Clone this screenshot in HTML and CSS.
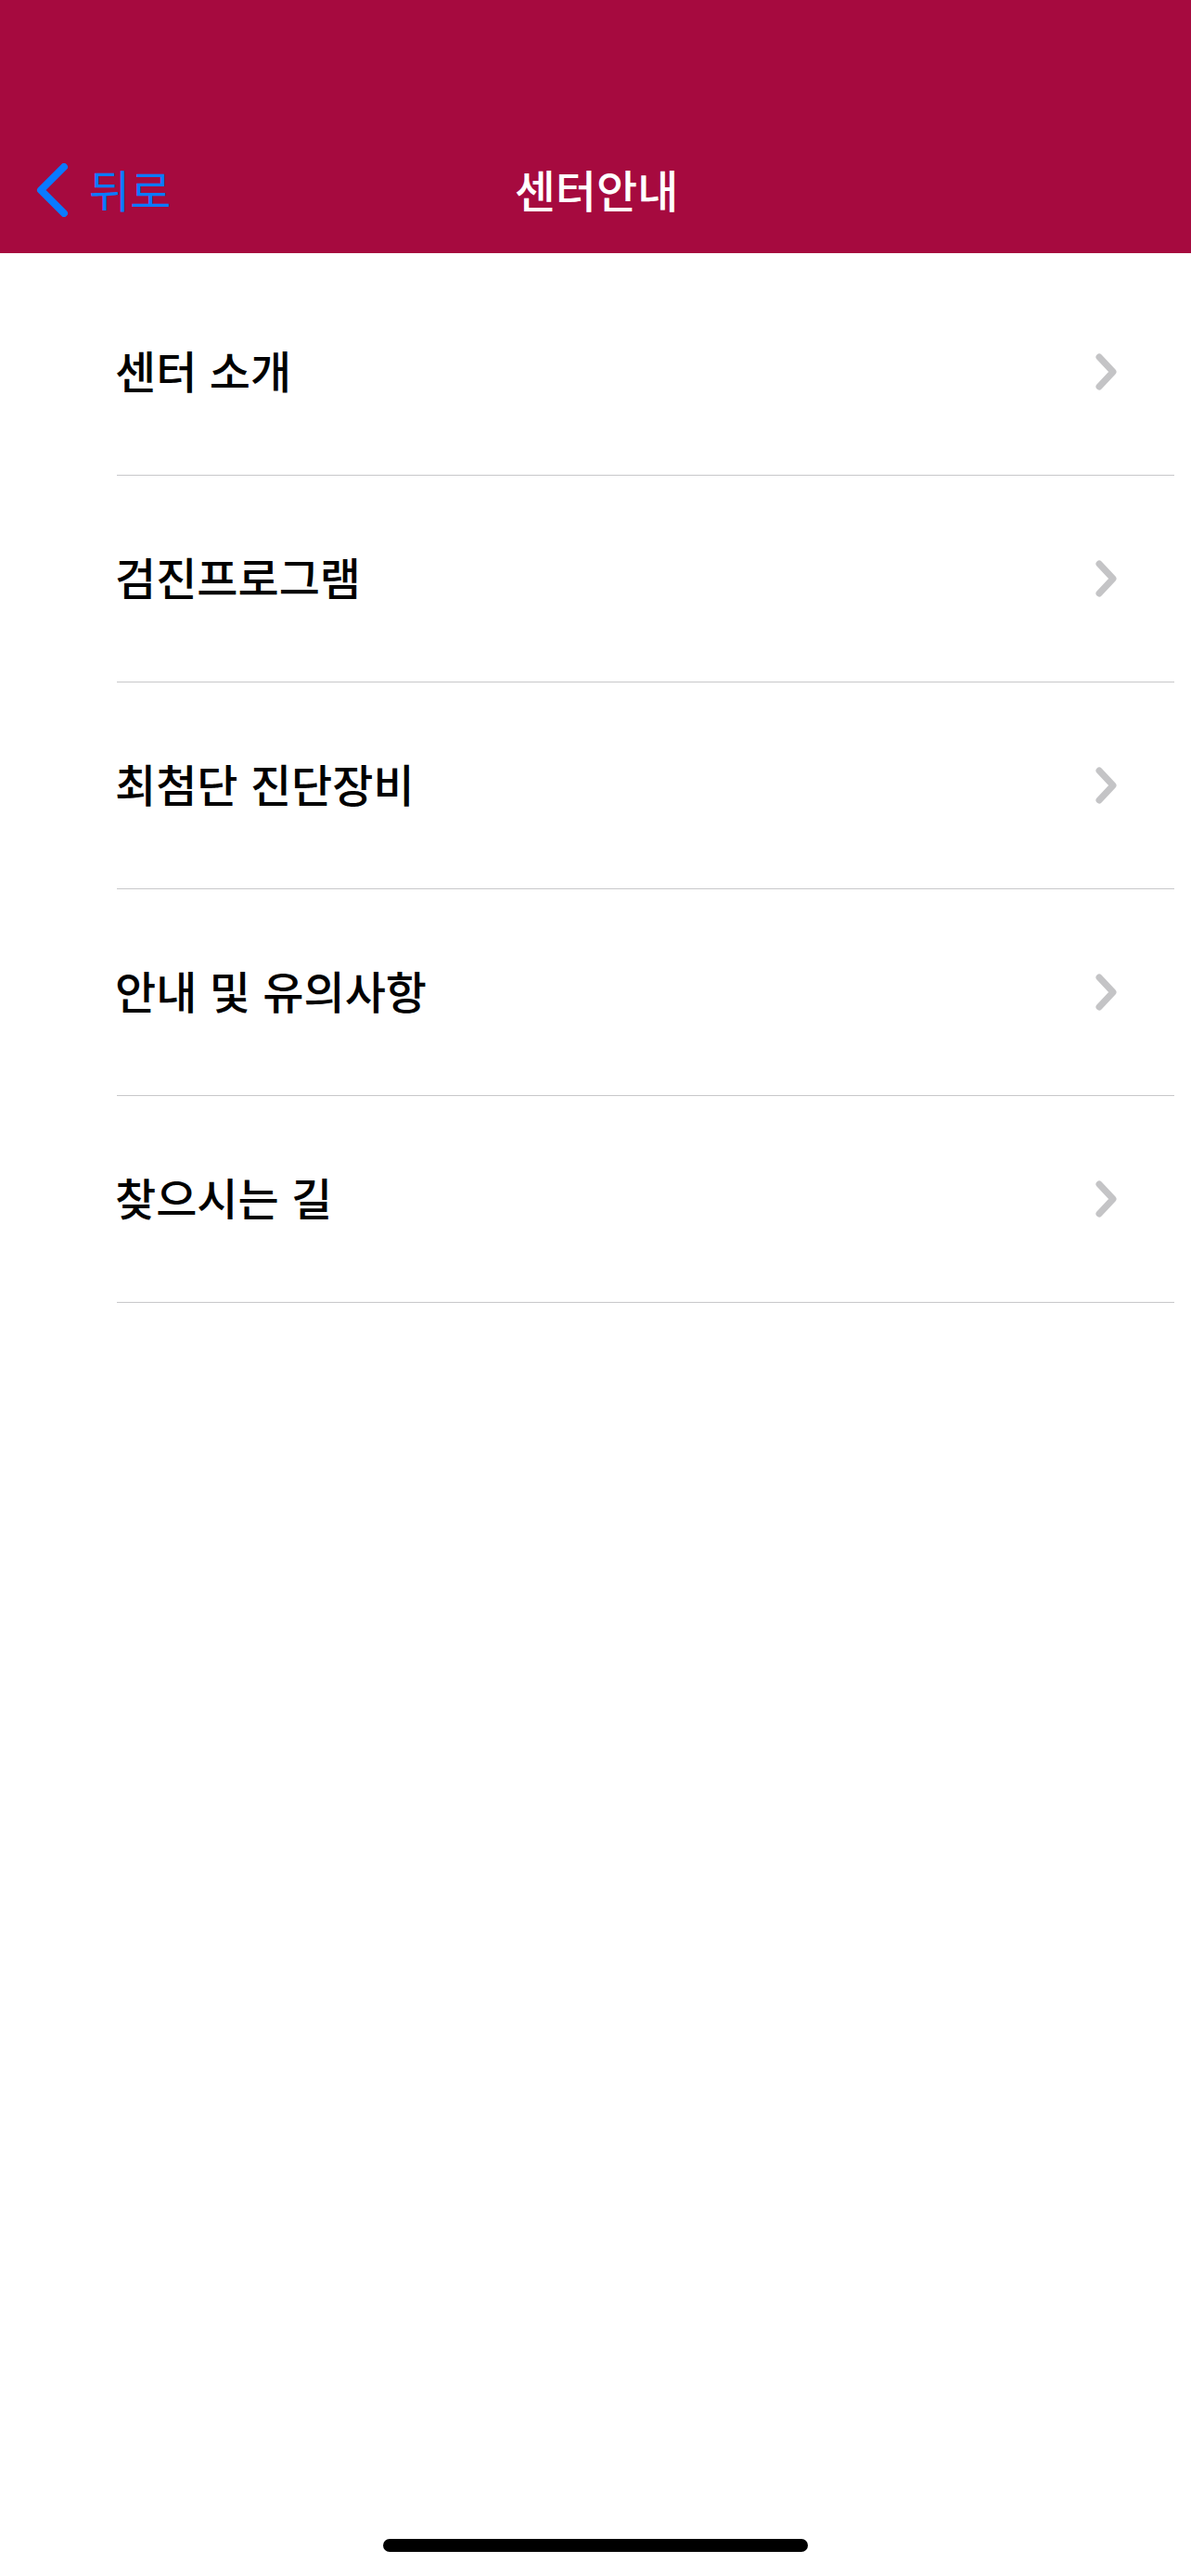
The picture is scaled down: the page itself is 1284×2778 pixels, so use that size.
FILE: index.html
```html
<!DOCTYPE html>
<html lang="ko">
<head>
    <meta charset="UTF-8">
    <meta name="viewport" content="width=device-width, initial-scale=1.0">
    <title>센터안내</title>
    <link rel="stylesheet" href="styles.css">
</head>
<body>
    <header class="header">
        <div class="nav-bar">
            <a class="back" href="#">
                <svg class="back-icon" viewBox="0 0 36 58" width="36" height="58">
                    <path d="M31 4 L6 29 L31 54" fill="none" stroke="#0A7AFF" stroke-width="8" stroke-linecap="round" stroke-linejoin="round"/>
                </svg>
                <span>뒤로</span>
            </a>
            <h1 class="title">센터안내</h1>
        </div>
    </header>

    <ul class="menu">
        <li class="menu-item"><span>센터 소개</span><svg class="chevron" viewBox="0 0 26 40" width="26" height="40"><path d="M5 4 L20 20 L5 36" fill="none" stroke="#C4C4C6" stroke-width="7" stroke-linecap="round" stroke-linejoin="round"/></svg></li>
        <li class="menu-item"><span>검진프로그램</span><svg class="chevron" viewBox="0 0 26 40" width="26" height="40"><path d="M5 4 L20 20 L5 36" fill="none" stroke="#C4C4C6" stroke-width="7" stroke-linecap="round" stroke-linejoin="round"/></svg></li>
        <li class="menu-item"><span>최첨단 진단장비</span><svg class="chevron" viewBox="0 0 26 40" width="26" height="40"><path d="M5 4 L20 20 L5 36" fill="none" stroke="#C4C4C6" stroke-width="7" stroke-linecap="round" stroke-linejoin="round"/></svg></li>
        <li class="menu-item"><span>안내 및 유의사항</span><svg class="chevron" viewBox="0 0 26 40" width="26" height="40"><path d="M5 4 L20 20 L5 36" fill="none" stroke="#C4C4C6" stroke-width="7" stroke-linecap="round" stroke-linejoin="round"/></svg></li>
        <li class="menu-item"><span>찾으시는 길</span><svg class="chevron" viewBox="0 0 26 40" width="26" height="40"><path d="M5 4 L20 20 L5 36" fill="none" stroke="#C4C4C6" stroke-width="7" stroke-linecap="round" stroke-linejoin="round"/></svg></li>
    </ul>

    <div class="home-indicator"></div>
</body>
</html>
```

FILE: styles.css
```css
* {
    margin: 0;
    padding: 0;
    box-sizing: border-box;
    font-family: "Noto Sans CJK KR", "Noto Sans", sans-serif;
}

body {
    background-color: #fff;
    color: #000;
    width: 1284px;
    min-height: 2778px;
    position: relative;
}

.header {
    background-color: #A60A3F;
    height: 273px;
    display: flex;
    align-items: flex-end;
}

.nav-bar {
    width: 100%;
    height: 136px;
    display: flex;
    align-items: center;
    justify-content: center;
    position: relative;
}

.back {
    position: absolute;
    left: 38px;
    top: 0;
    height: 100%;
    display: flex;
    align-items: center;
    gap: 22px;
    color: #0A7AFF;
    text-decoration: none;
    font-size: 48px;
}

.back-icon {
    display: block;
}

.back span,
.title {
    position: relative;
    top: -2px;
}

.title {
    color: #fff;
    font-size: 48px;
    font-weight: 500;
    margin-left: 2px;
}

.menu {
    list-style: none;
    padding-top: 17px;
}

.menu-item {
    height: 223px;
    margin-left: 126px;
    margin-right: 18px;
    padding-right: 60px;
    border-bottom: 1px solid #C8C8CA;
    display: flex;
    align-items: center;
    justify-content: space-between;
    font-size: 48px;
    font-weight: 500;
}

.menu-item span {
    margin-left: -2px;
    position: relative;
    top: -3px;
}

.chevron {
    display: block;
}

.home-indicator {
    position: absolute;
    left: 413px;
    bottom: 26px;
    width: 458px;
    height: 14px;
    border-radius: 7px;
    background-color: #000;
}
```
